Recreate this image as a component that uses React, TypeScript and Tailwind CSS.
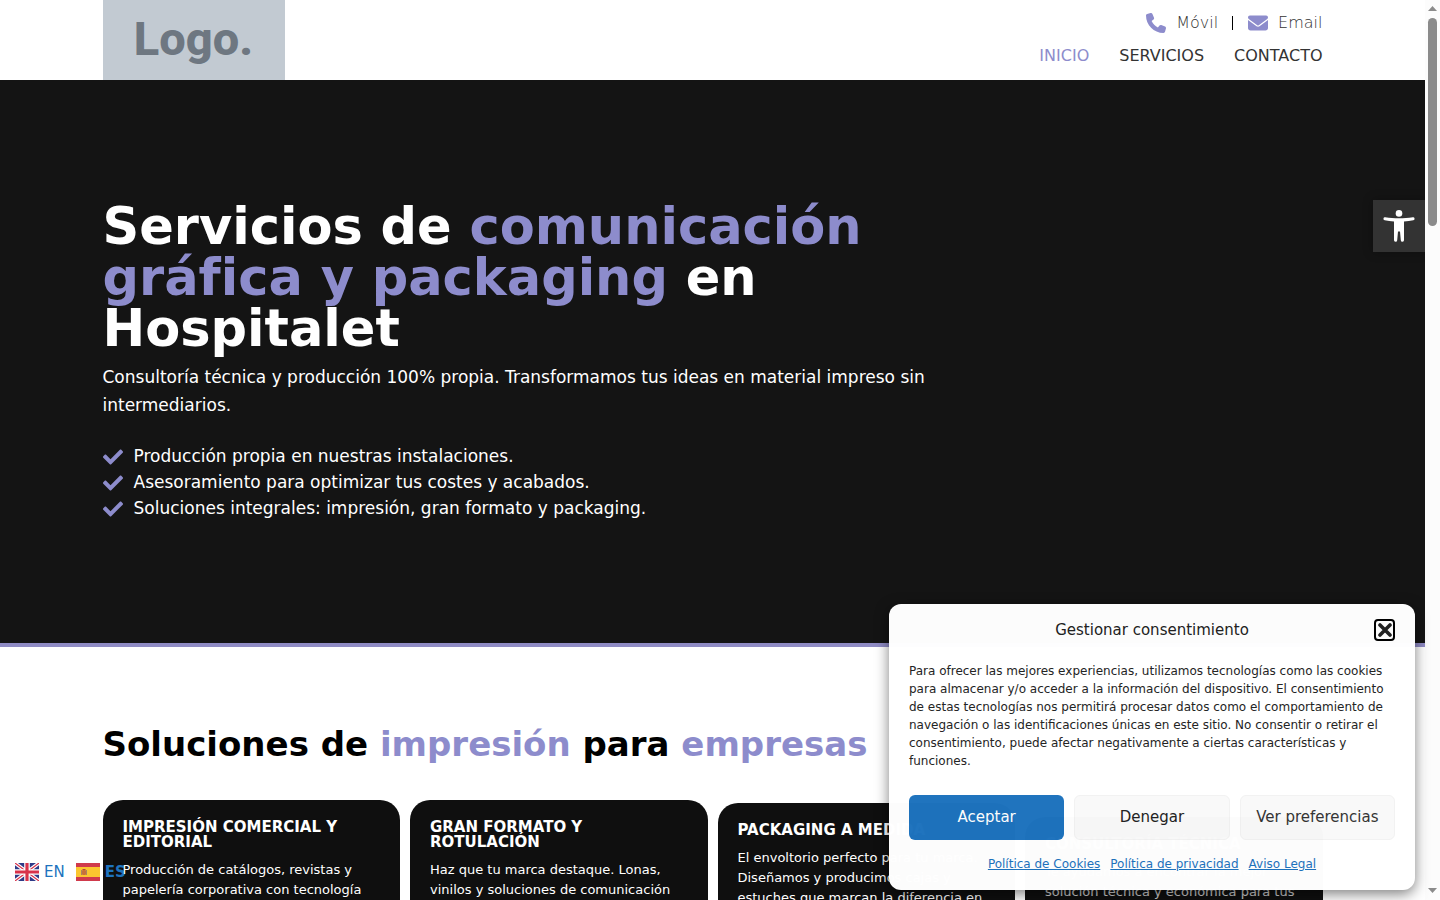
import React, { useState } from 'react'
import { FaCheck } from 'react-icons/fa'
import { FaEnvelope, FaPhone } from 'react-icons/fa6'

const navItems = [
  { label: 'Inicio', active: true },
  { label: 'Servicios', active: false },
  { label: 'Contacto', active: false },
]

const advantages = [
  'Producción propia en nuestras instalaciones.',
  'Asesoramiento para optimizar tus costes y acabados.',
  'Soluciones integrales: impresión, gran formato y packaging.',
]

const services = [
  {
    title: 'Impresión comercial y editorial',
    text: 'Producción de catálogos, revistas y papelería corporativa con tecnología',
    offset: '',
  },
  {
    title: 'Gran formato y rotulación',
    text: 'Haz que tu marca destaque. Lonas, vinilos y soluciones de comunicación',
    offset: '',
  },
  {
    title: 'Packaging a medida',
    text: 'El envoltorio perfecto para tu marca. Diseñamos y producimos cajas y estuches que marcan la diferencia en',
    offset: 'mt-[3px]',
  },
  {
    title: 'Consultoría técnica',
    text: 'Te ayudamos a encontrar la mejor solución técnica y económica para tus',
    offset: 'mt-[17px] text-white/80',
  },
]

const legalLinks = ['Política de Cookies', 'Política de privacidad', 'Aviso Legal']

function FlagUK() {
  return (
    <svg viewBox="0 0 60 45" className="h-[18px] w-6" aria-hidden="true">
      <rect width="60" height="45" fill="#2e3a87" />
      <path d="M0 0L60 45M60 0L0 45" stroke="#fff" strokeWidth="9" />
      <path d="M0 0L60 45M60 0L0 45" stroke="#d8324a" strokeWidth="3" />
      <path d="M30 0V45M0 22.5H60" stroke="#fff" strokeWidth="14" />
      <path d="M30 0V45M0 22.5H60" stroke="#d8324a" strokeWidth="8" />
    </svg>
  )
}

function FlagES() {
  return (
    <svg viewBox="0 0 24 18" className="h-[18px] w-6" aria-hidden="true">
      <rect width="24" height="18" fill="#d03a4c" />
      <rect y="4" width="24" height="10" fill="#fbc62f" />
      <rect x="6" y="7" width="4" height="5" rx="1" fill="#c8703a" />
      <path d="M5.5 7v5M10.5 7v5" stroke="#a98560" strokeWidth="1" />
      <path d="M6.5 6.5h3" stroke="#b5443a" strokeWidth="1" />
    </svg>
  )
}

function AccessibilityIcon() {
  return (
    <svg viewBox="0 0 32 32" className="h-8 w-8" fill="currentColor" aria-hidden="true">
      <circle cx="16" cy="3.4" r="3.3" />
      <path d="M2.2 7.2C7 8 11 8.200 16 8.200s9-.2 13.800-1a1.500 1.500 0 0 1 .5 3c-3 .6-6 1-9.300 1.300V30a1.600 1.600 0 0 1-3.200.2L17 21.500h-2l-.8 8.700A1.600 1.600 0 0 1 11 30V11.500c-3.300-.3-6.300-.7-9.300-1.300a1.500 1.500 0 0 1 .5-3z" />
    </svg>
  )
}

function Header() {
  return (
    <header className="bg-white">
      <div className="mx-auto flex h-20 max-w-[1220px] justify-between">
        <a
          href="#"
          className="flex w-[182px] items-center justify-center bg-[#c2cad2] pb-1 font-['Roboto'] text-[47px] leading-none font-extrabold text-[#6e7781]"
        >
          Logo.
        </a>
        <div className="flex flex-col items-end">
          <div className="mt-3 flex h-[22px] items-center font-extralight text-[#333333]">
            <a href="#" className="flex items-center gap-[10px]">
              <FaPhone className="h-5 w-5 text-[#8d8ccc]" />
              Móvil
            </a>
            <span className="mr-[15px] ml-[14px] h-[14px] w-px bg-black" />
            <a href="#" className="flex items-center gap-[10px]">
              <FaEnvelope className="h-5 w-5 text-[#8d8ccc]" />
              Email
            </a>
          </div>
          <nav className="mt-[10px] flex gap-[30px] leading-6 uppercase">
            {navItems.map((item) => (
              <a key={item.label} href="#" className={item.active ? 'text-[#8d8ccc]' : 'text-[#333333]'}>
                {item.label}
              </a>
            ))}
          </nav>
        </div>
      </div>
    </header>
  )
}

function Hero() {
  return (
    <section className="border-b-4 border-[#8f8bc4] bg-[#141414] pt-[121px] pb-[122px] text-white">
      <div className="mx-auto max-w-[1220px]">
        <div className="max-w-[854px] text-[17px]">
          <h1 className="text-[51px] leading-[51px] font-bold [text-rendering:optimizeSpeed]">
            Servicios de <span className="text-[#8d8ccc]">comunicación gráfica y packaging</span> en Hospitalet
          </h1>
          <p className="mt-[9px] leading-7">
            Consultoría técnica y producción 100% propia. Transformamos tus ideas en material impreso sin
            intermediarios.
          </p>
          <ul className="mt-6 leading-[26px]">
            {advantages.map((item) => (
              <li key={item} className="flex items-center gap-[11px]">
                <FaCheck className="mt-px h-5 w-5 text-[#8d8ccc]" />
                {item}
              </li>
            ))}
          </ul>
        </div>
      </div>
    </section>
  )
}

function Services() {
  return (
    <section className="bg-white pt-20">
      <div className="mx-auto max-w-[1220px]">
        <h2 className="text-[34px] leading-[34px] font-bold text-black">
          Soluciones de <span className="text-[#8d8ccc]">impresión</span> para{' '}
          <span className="text-[#8d8ccc]">empresas</span>
        </h2>
        <div className="mt-[39px] grid grid-cols-4 gap-[10px] text-white">
          {services.map((service) => (
            <article key={service.title} className={`h-60 rounded-[20px] bg-[#0f0f0f] p-5 ${service.offset}`}>
              <h3 className="relative z-20 text-[15px] leading-[15px] font-bold uppercase [text-rendering:optimizeSpeed]">
                {service.title}
              </h3>
              <p className="relative z-20 mt-[10px] text-[13px] leading-5">{service.text}</p>
            </article>
          ))}
        </div>
      </div>
    </section>
  )
}

function CookieBanner({ onClose }: { onClose: () => void }) {
  return (
    <div
      role="dialog"
      aria-labelledby="cookie-title"
      className="absolute right-[25px] bottom-[10px] z-30 w-[526px] rounded-xl bg-white px-5 pt-[15px] pb-[17px] text-[#222222] opacity-99 shadow-[0_4px_14px_rgba(0,0,0,0.5)]"
    >
      <div className="grid grid-cols-[21px_1fr_21px] items-center">
        <span />
        <h2 id="cookie-title" className="text-center text-[15px] leading-[22px]">
          Gestionar consentimiento
        </h2>
        <button
          type="button"
          aria-label="Cerrar ventana"
          onClick={onClose}
          className="flex h-[22px] items-center justify-center rounded-[4px] border-2 border-black"
        >
          <svg viewBox="0 0 14 14" className="h-[14px] w-[14px]" aria-hidden="true">
            <path d="M2 2L12 12M12 2L2 12" stroke="currentColor" strokeWidth="3.600" strokeLinecap="round" />
          </svg>
        </button>
      </div>
      <p className="mt-[21px] text-xs leading-[18px]">
        Para ofrecer las mejores experiencias, utilizamos tecnologías como las cookies para almacenar y/o acceder a
        la información del dispositivo. El consentimiento de estas tecnologías nos permitirá procesar datos como el
        comportamiento de navegación o las identificaciones únicas en este sitio. No consentir o retirar el
        consentimiento, puede afectar negativamente a ciertas características y funciones.
      </p>
      <div className="mt-[25px] grid grid-cols-3 gap-[10px] text-[15px]">
        <button type="button" onClick={onClose} className="h-[45px] rounded-md bg-[#1e73be] text-white">
          Aceptar
        </button>
        <button type="button" onClick={onClose} className="h-[45px] rounded-md border border-[#f2f2f2] bg-[#f9f9f9]">
          Denegar
        </button>
        <button
          type="button"
          className="h-[45px] rounded-md border border-[#f2f2f2] bg-[#f9f9f9] whitespace-nowrap text-[#333333]"
        >
          Ver preferencias
        </button>
      </div>
      <div className="mt-[15px] flex justify-center gap-[10px] text-xs leading-[18px] text-[#1e73be]">
        {legalLinks.map((link) => (
          <a key={link} href="#" className="underline">
            {link}
          </a>
        ))}
      </div>
    </div>
  )
}

function ScrollRail() {
  return (
    <div
      className="relative z-10 flex w-[15px] shrink-0 flex-col items-center bg-[#fcfcfc] text-[#8b8b8b]"
      aria-hidden="true"
    >
      <svg viewBox="0 0 15 18" className="h-[18px] w-[15px]" fill="currentColor">
        <path d="M3 11L7.500 6L12 11z" />
      </svg>
      <div className="h-[208px] w-[9px] rounded-full bg-[#8b8b8b]" />
      <svg viewBox="0 0 15 18" className="mt-auto h-[18px] w-[15px]" fill="currentColor">
        <path d="M3 6L7.500 11L12 6z" />
      </svg>
    </div>
  )
}

export default function App() {
  const [showCookies, setShowCookies] = useState<boolean>(true)

  return (
    <div className="relative flex h-screen overflow-hidden bg-white font-['DejaVu_Sans',sans-serif] text-base">
      <div className="min-w-0 flex-1">
        <Header />
        <main>
          <Hero />
          <Services />
        </main>
      </div>
      <ScrollRail />

      <button
        type="button"
        aria-label="Abrir barra de herramientas"
        className="absolute top-[200px] right-[15px] flex h-[52px] w-[52px] items-center justify-center bg-[#333333] text-white shadow-[0_0_10px_rgba(0,0,0,0.3)]"
      >
        <AccessibilityIcon />
      </button>

      {/* language switcher */}
      <div className="absolute bottom-4 left-[15px] z-10 flex items-center gap-[11px] text-[15px] leading-6 text-[#1e73be]">
        <a href="#" className="flex items-center gap-[5px]">
          <FlagUK />
          EN
        </a>
        <a href="#" className="flex items-center gap-[5px] font-bold">
          <FlagES />
          ES
        </a>
      </div>

      {showCookies && <CookieBanner onClose={() => setShowCookies(false)} />}
    </div>
  )
}
